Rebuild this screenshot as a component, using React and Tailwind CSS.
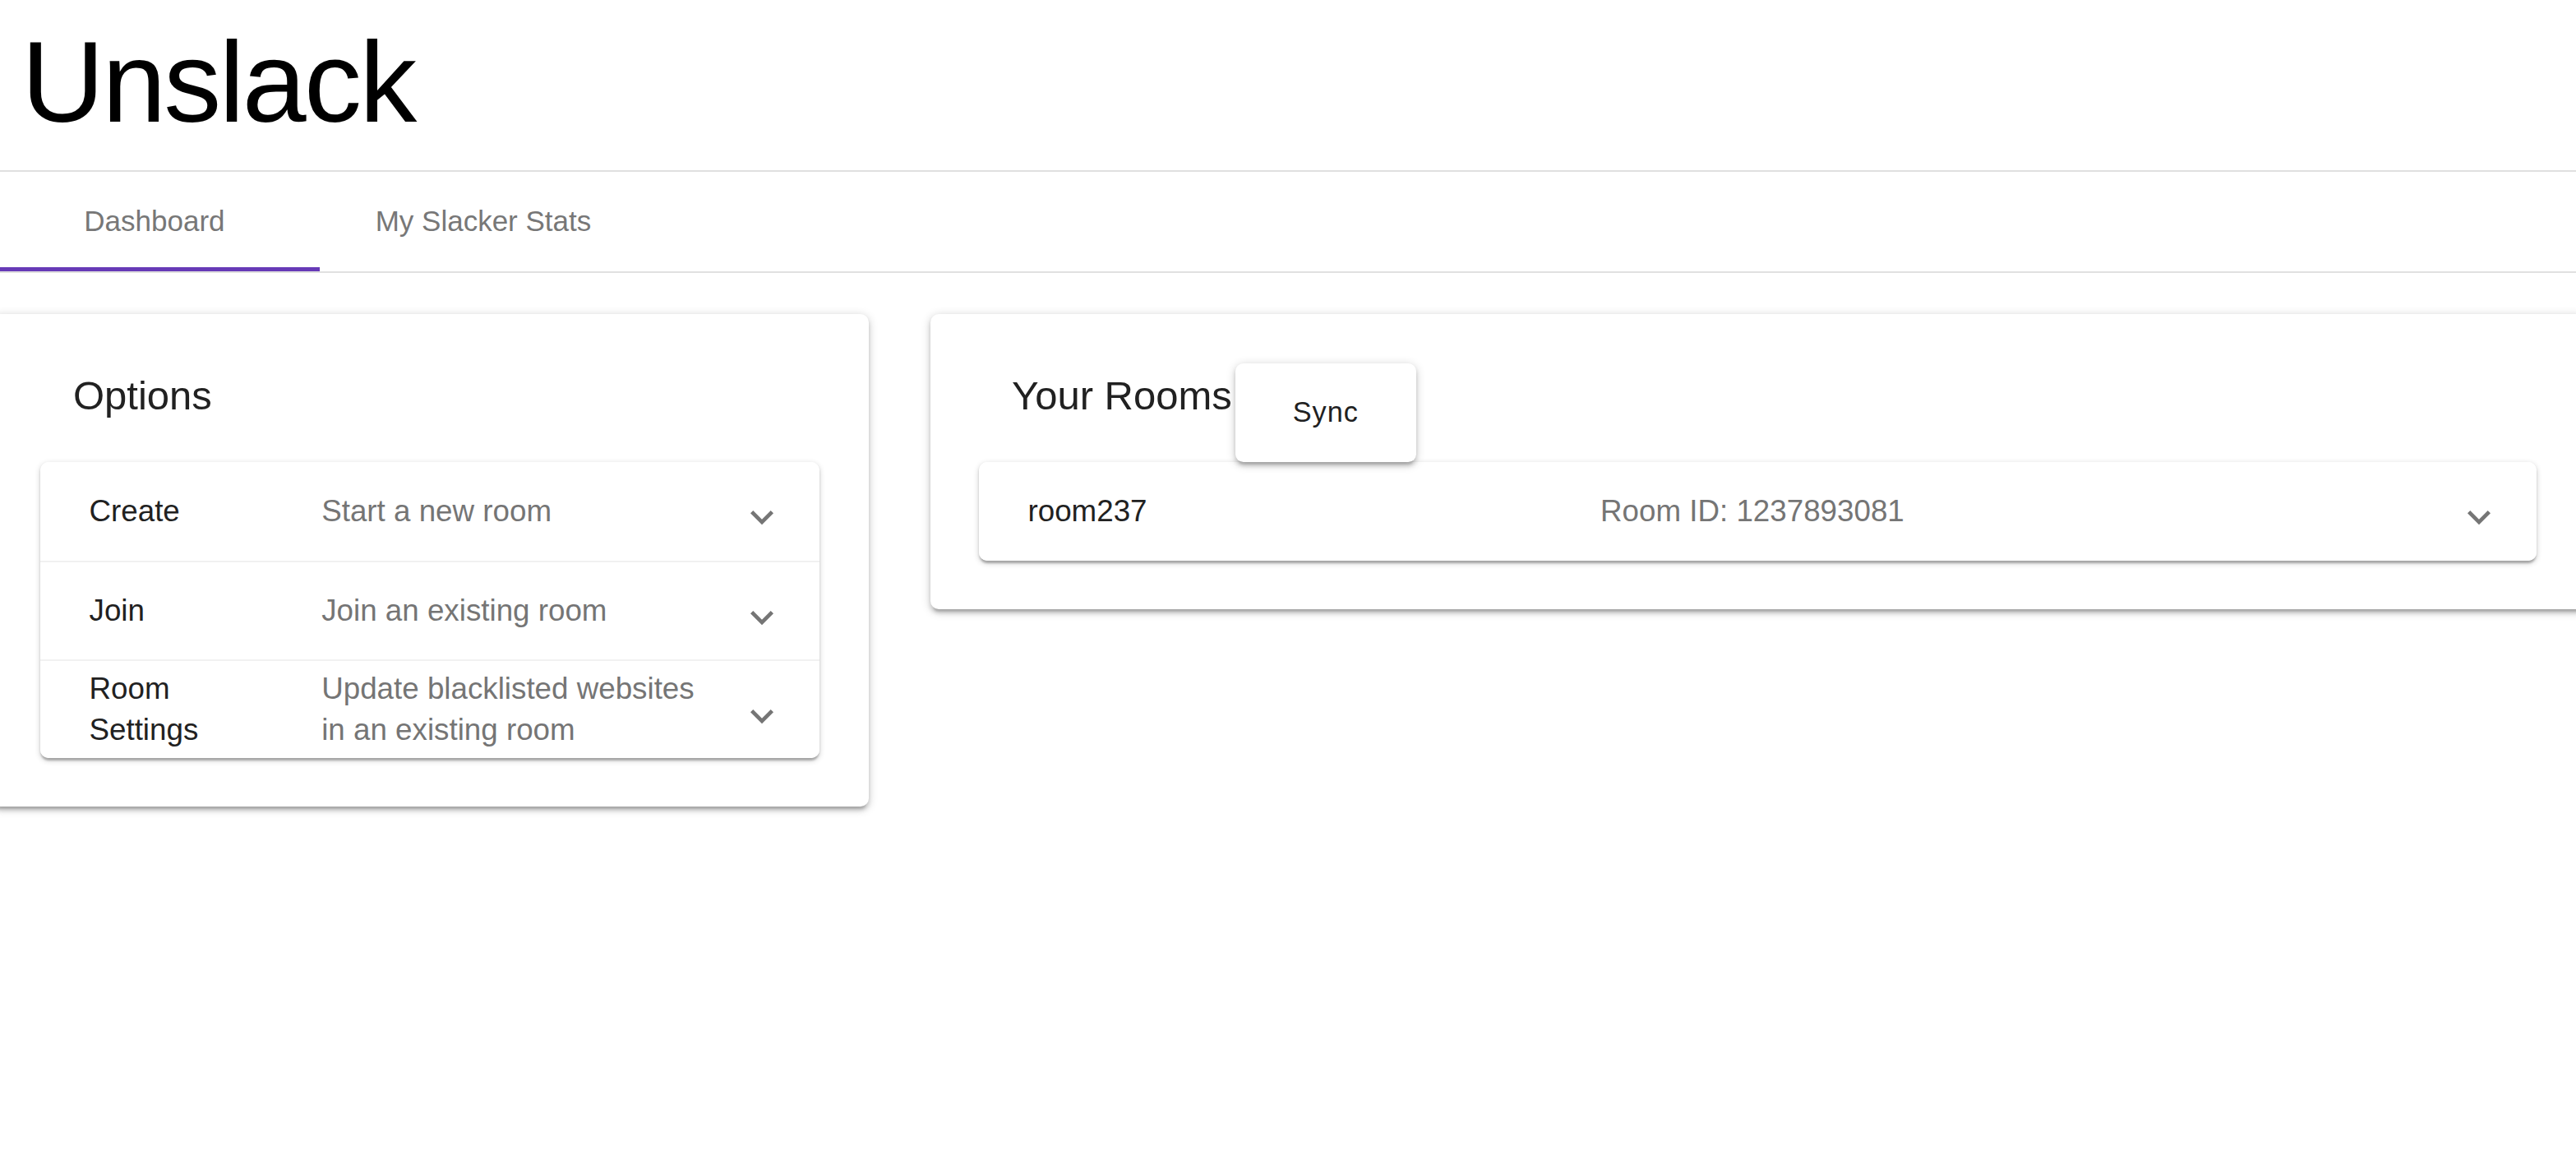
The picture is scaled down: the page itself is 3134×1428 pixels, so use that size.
import React from "react";

const panelShadow =
  "shadow-[0_2.45px_7.35px_0_rgba(0,0,0,0.2),0_2.45px_2.45px_0_rgba(0,0,0,0.14),0_4.9px_2.45px_-2.45px_rgba(0,0,0,0.12)]";
const cardShadow =
  "shadow-[0_2.45px_12px_0_rgba(0,0,0,0.2),0_4.9px_4.9px_0_rgba(0,0,0,0.14),0_7.35px_2.45px_-4.9px_rgba(0,0,0,0.12)]";

function Chevron() {
  return (
    <svg
      viewBox="0 0 24 24"
      className="absolute right-[42px] top-[39px] h-[56px] w-[56px]"
      fill="#757575"
    >
      <path d="M16.59 8.59L12 13.17 7.41 8.59 6 10l6 6 6-6z" />
    </svg>
  );
}

function Row({ heading, secondary, headingWidth, headingTextWidth, secondaryWidth, divider }) {
  return (
    <div
      className={
        "relative flex h-[120px] items-center bg-white pl-[59.5px] " +
        (divider ? "border-t-2 border-[#f1f1f1]" : "")
      }
    >
      <div className="shrink-0" style={{ width: headingWidth }}>
        <div
          className="text-[36.75px] leading-[50px] text-[#212121]"
          style={{ maxWidth: headingTextWidth }}
        >
          {heading}
        </div>
      </div>
      <div
        className="text-[36.75px] leading-[50px] text-[#757575]"
        style={{ width: secondaryWidth }}
      >
        {secondary}
      </div>
      <Chevron />
    </div>
  );
}

export default function App() {
  return (
    <div className="min-h-screen w-full overflow-hidden bg-white font-['Liberation_Sans',Arial,sans-serif]">
      <div className="h-[207px] pl-[26px] pt-[29.5px]">
        <h1 className="text-[140px] leading-[140px] tracking-[-0.02em] text-black">
          Unslack
        </h1>
      </div>

      <div className="flex h-[125px] border-t-2 border-b-2 border-[#e0e0e0]">
        <div className="relative flex w-[389px] items-center pl-[102.3px]">
          <span className="text-[35px] text-[#777777]">Dashboard</span>
          <div className="absolute bottom-0 left-0 h-[5px] w-full bg-[#673ab7]" />
        </div>
        <div className="flex items-center pl-[67.7px]">
          <span className="text-[35px] text-[#777777]">My Slacker Stats</span>
        </div>
      </div>

      <div className="ml-[-10.5px] mt-[50px] flex items-start gap-[75px]">
        <div
          className={
            "w-[1067px] shrink-0 rounded-[10px] bg-white p-[59.5px] " + cardShadow
          }
        >
          <div className="flex h-[120px] items-start pl-[40px]">
            <h2 className="text-[49px] leading-[78.4px] text-[#212121]">Options</h2>
          </div>
          <div className={"overflow-hidden rounded-[10px] bg-white " + panelShadow}>
            <Row
              heading="Create"
              secondary="Start a new room"
              headingWidth="282.7px"
              headingTextWidth="200px"
              secondaryWidth="467px"
            />
            <Row
              heading="Join"
              secondary="Join an existing room"
              headingWidth="282.7px"
              headingTextWidth="200px"
              secondaryWidth="467px"
              divider
            />
            <Row
              heading="Room Settings"
              secondary="Update blacklisted websites in an existing room"
              headingWidth="282.7px"
              headingTextWidth="200px"
              secondaryWidth="467px"
              divider
            />
          </div>
        </div>

        <div
          className={
            "w-[2014px] shrink-0 rounded-[10px] bg-white p-[59.5px] " + cardShadow
          }
        >
          <div className="flex h-[120px] items-start pl-[40px]">
            <h2 className="text-[49px] leading-[78.4px] text-[#212121]">Your Rooms</h2>
            <button
              className={
                "relative z-10 ml-[4px] flex h-[120px] w-[220px] items-center justify-center rounded-[9.8px] bg-white text-[34.3px] tracking-[0.02857em] text-[#212121] " +
                cardShadow
              }
            >
              Sync
            </button>
          </div>
          <div className={"overflow-hidden rounded-[10px] bg-white " + panelShadow}>
            <Row
              heading="room237"
              secondary="Room ID: 1237893081"
              headingWidth="696.5px"
              headingTextWidth="600px"
              secondaryWidth="900px"
            />
          </div>
        </div>
      </div>
    </div>
  );
}
